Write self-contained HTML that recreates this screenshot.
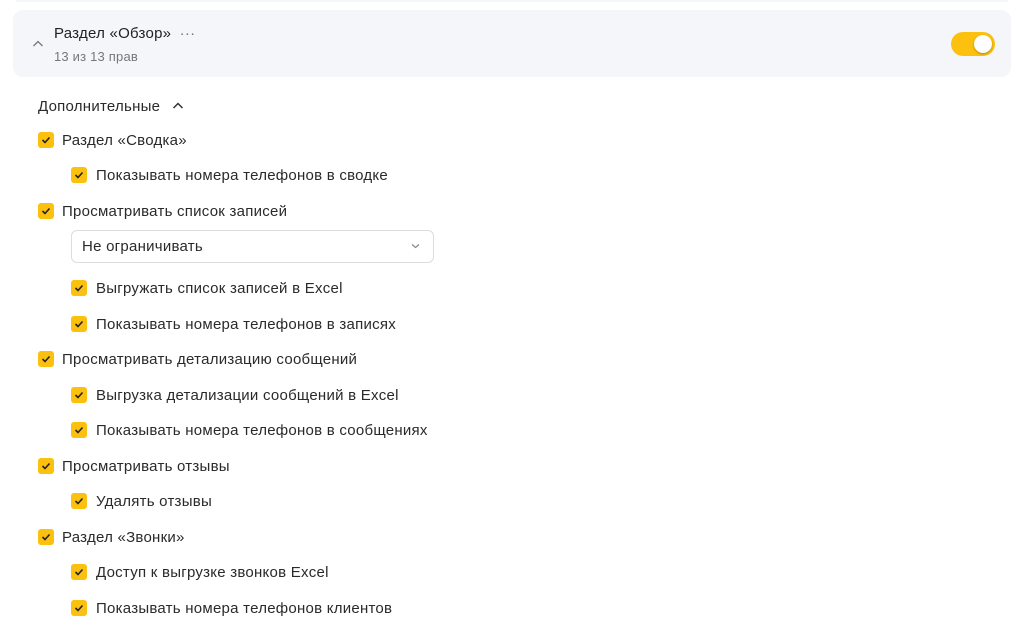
<!DOCTYPE html>
<html><head><meta charset="utf-8"><style>
body{margin:0;width:1024px;height:637px;background:#fff;font-family:"Liberation Sans",sans-serif;color:#222;position:relative;overflow:hidden}
.a{position:absolute}
.top{left:13px;top:-10px;width:998px;height:12px;background:#f5f6f9;border-radius:10px}
.card{left:13px;top:10px;width:998px;height:67px;background:#f5f6f9;border-radius:10px}
.cb{position:absolute;width:16px;height:16px;background:#fcc10e;border-radius:3px}
.cb svg{position:absolute;left:3px;top:4px}
.t{position:absolute;font-size:15px;letter-spacing:0.25px;line-height:18px;white-space:nowrap;color:#2a2a2a}
.tog{left:951px;top:32px;width:44px;height:24px;border-radius:12px;background:#fcc10e}
.knob{position:absolute;right:3px;top:3px;width:18px;height:18px;border-radius:50%;background:#fff;box-shadow:0 1px 2px rgba(0,0,0,.3)}
.dd{left:71px;top:230px;width:361px;height:31px;border:1px solid #ddd;border-radius:6px}
</style></head><body>
<div class="a top"></div>
<div class="a card"></div>
<svg class="a" style="left:32px;top:40px" width="12" height="8"><path d="M1.5 6 L6 1.5 L10.5 6" fill="none" stroke="#777" stroke-width="1.3"/></svg>
<div class="t" style="left:54px;top:25px;font-size:15px;color:#222">Раздел «Обзор» <span style="color:#777;margin-left:4px">···</span></div>
<div class="t" style="left:54px;top:48px;font-size:13px;letter-spacing:0.2px;color:#777">13 из 13 прав</div>
<div class="a tog"><div class="knob"></div></div>
<div class="t" style="left:38px;top:98px;font-size:15px">Дополнительные</div>
<svg class="a" style="left:172px;top:102px" width="12" height="8"><path d="M1.5 6 L6 1.5 L10.5 6" fill="none" stroke="#333" stroke-width="1.5"/></svg>
<div class="a dd"></div>
<div class="t" style="left:82px;top:238px">Не ограничивать</div>
<svg class="a" style="left:411px;top:243px" width="9" height="6"><path d="M1 1.5 L4.5 4.5 L8 1.5" fill="none" stroke="#888" stroke-width="1.2"/></svg>
<div id="rows"></div>
<script>
var r=[[0,140,"Раздел «Сводка»"],[1,175,"Показывать номера телефонов в сводке"],[0,211,"Просматривать список записей"],[1,288,"Выгружать список записей в Excel"],[1,324,"Показывать номера телефонов в записях"],[0,359,"Просматривать детализацию сообщений"],[1,395,"Выгрузка детализации сообщений в Excel"],[1,430,"Показывать номера телефонов в сообщениях"],[0,466,"Просматривать отзывы"],[1,501,"Удалять отзывы"],[0,537,"Раздел «Звонки»"],[1,572,"Доступ к выгрузке звонков Excel"],[1,608,"Показывать номера телефонов клиентов"]];
var h="";r.forEach(function(x){var cx=x[0]?71:38,tx=x[0]?96:62;
h+='<div class="cb" style="left:'+cx+'px;top:'+(x[1]-8)+'px"><svg width="10" height="8"><path d="M1.5 4 L4 6.5 L8.5 1.5" fill="none" stroke="#222" stroke-width="1.6"/></svg></div><div class="t" style="left:'+tx+'px;top:'+(x[1]-8)+'px">'+x[2]+'</div>';});
document.getElementById("rows").innerHTML=h;
</script>
</body></html>
